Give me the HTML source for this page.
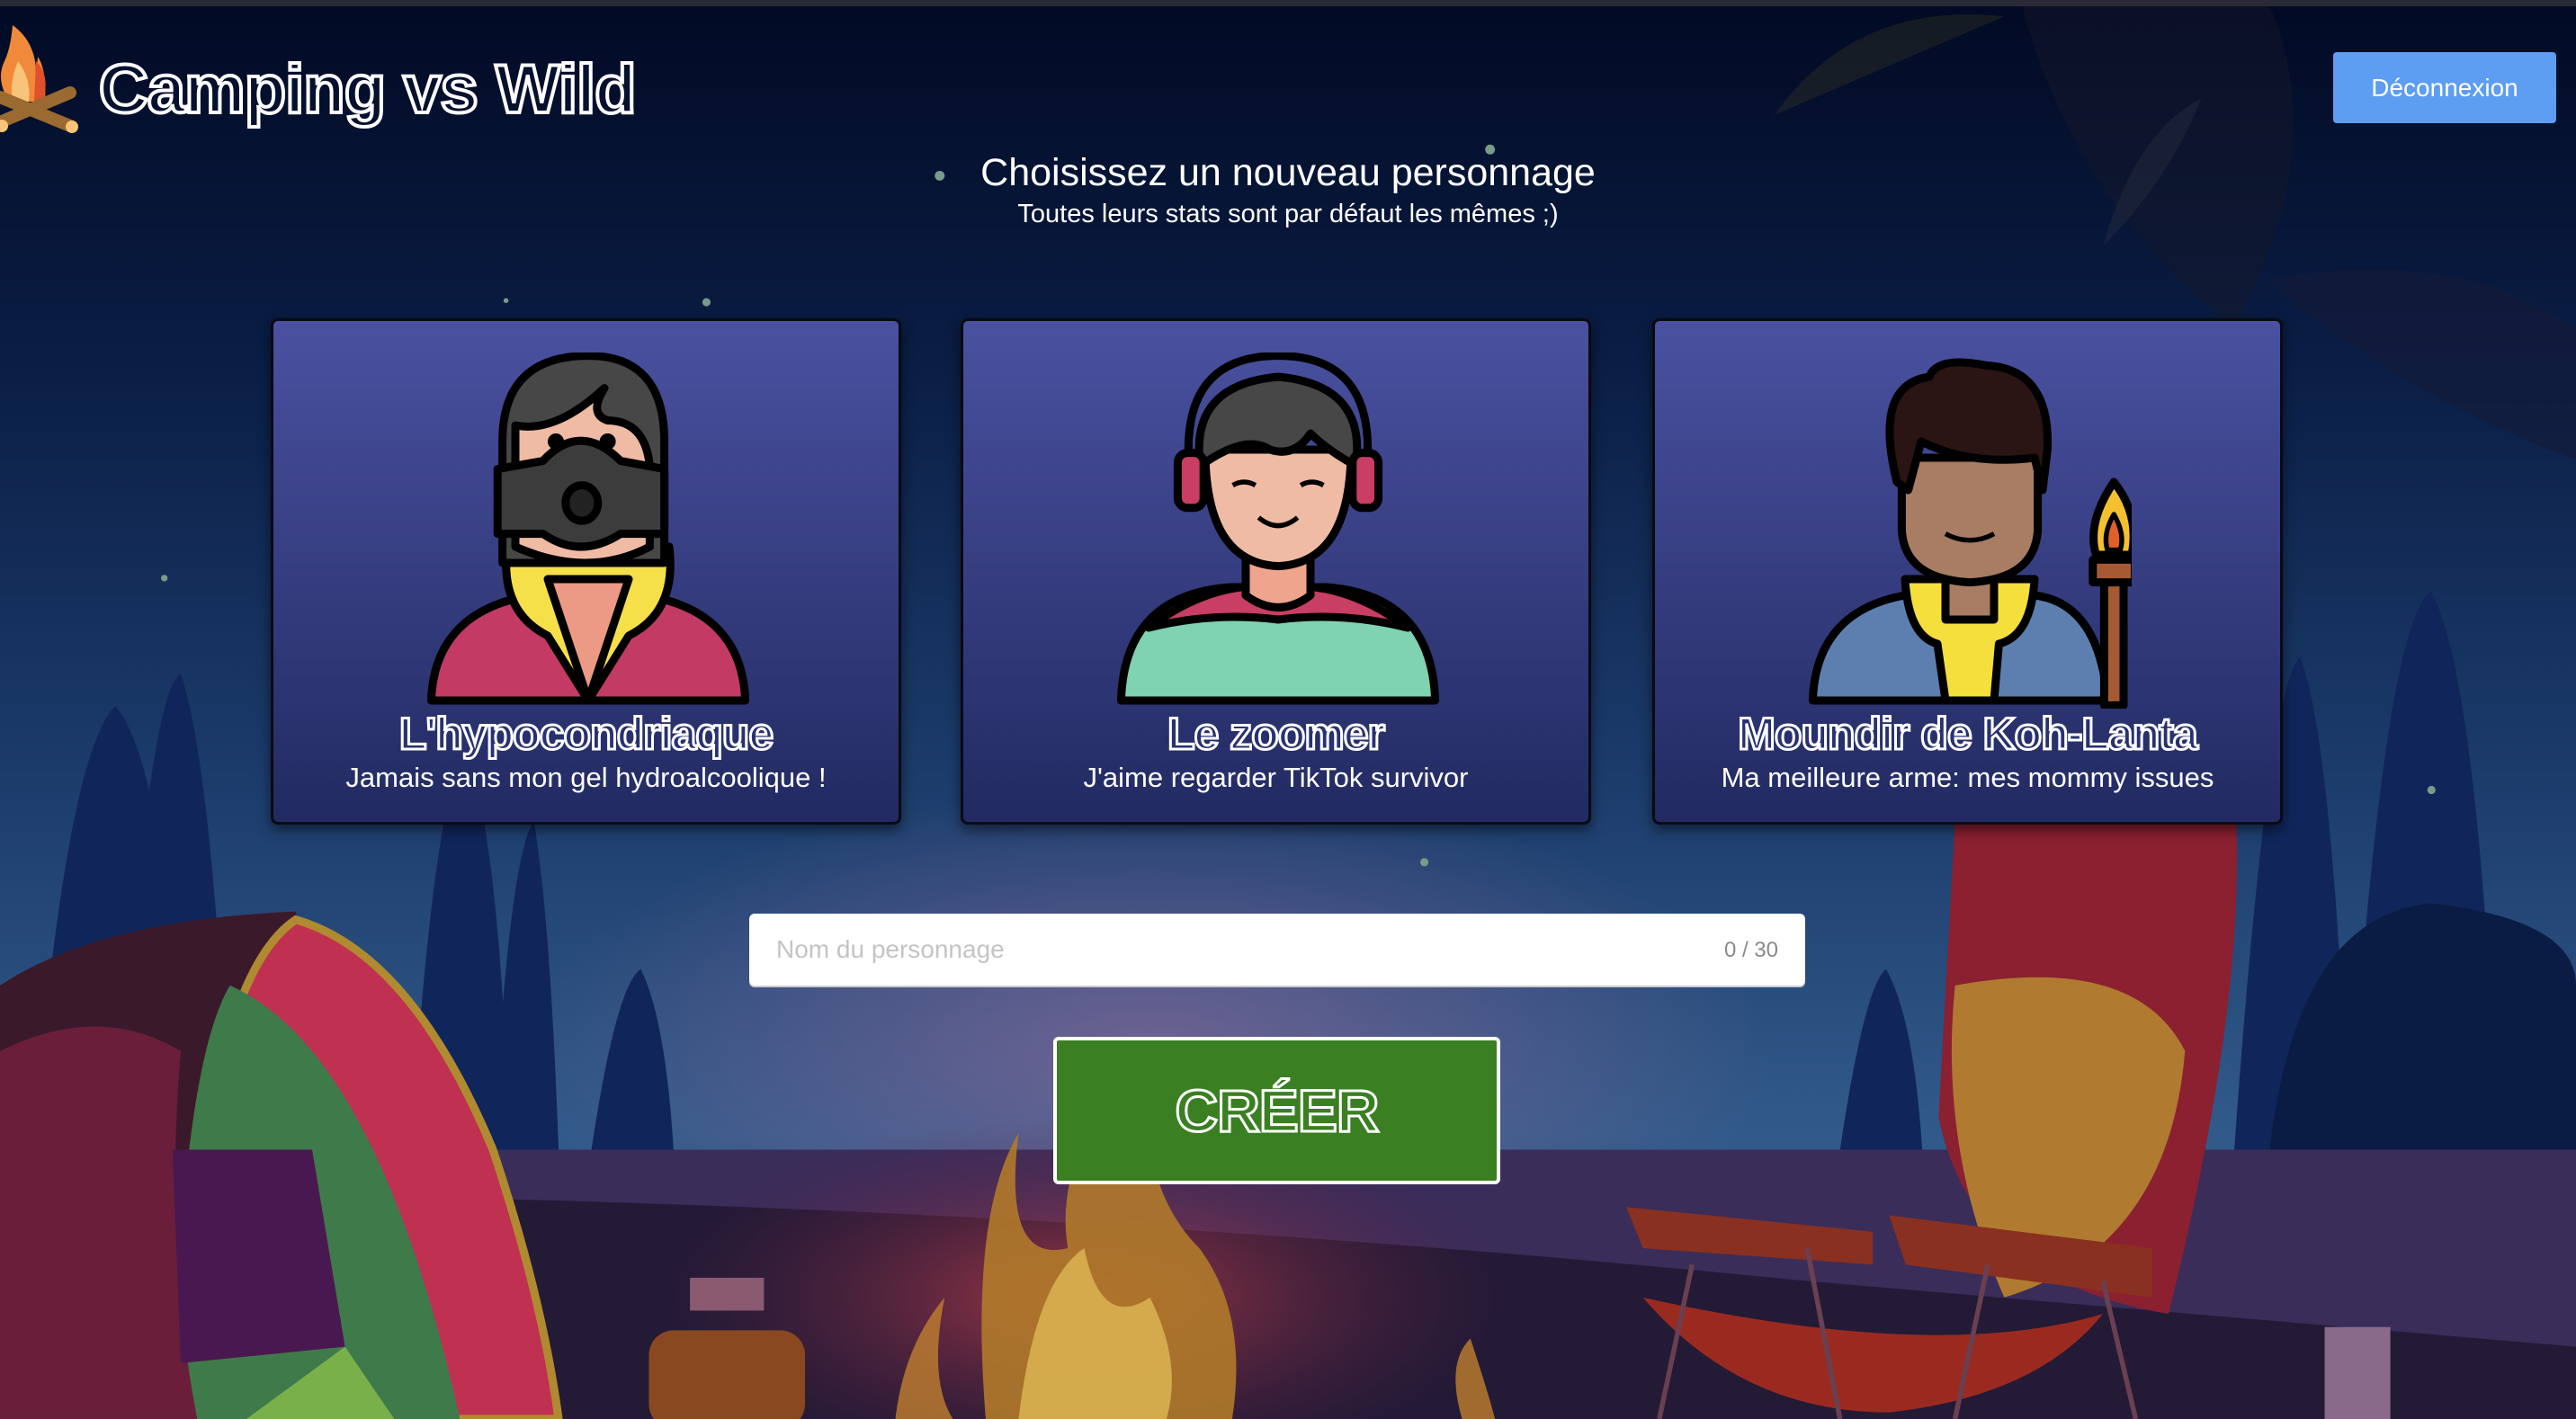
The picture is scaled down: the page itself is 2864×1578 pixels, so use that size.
<!DOCTYPE html>
<html><head><meta charset="utf-8">
<style>
html,body{margin:0;padding:0;width:2864px;height:1578px;overflow:hidden;background:#06112e;font-family:"Liberation Sans",sans-serif}
.bg{position:absolute;left:0;top:0;width:2864px;height:1578px}
.topbar{position:absolute;left:0;top:0;width:2864px;height:7px;background:#2a2a36}
.outl{color:transparent;-webkit-text-stroke:3px #fff;font-weight:bold;font-family:"Liberation Sans",sans-serif;letter-spacing:-1px}
.logo{position:absolute;left:110px;top:56px;font-size:76px;white-space:nowrap;color:#06112e;-webkit-text-stroke:4px #fff}
.btn{position:absolute;left:2594px;top:58px;width:248px;height:79px;background:#5d9df2;border-radius:4px;color:#fff;font-size:28px;line-height:79px;text-align:center}
.title{position:absolute;left:0;width:2864px;text-align:center;color:#fff}
.card{position:absolute;top:354px;width:695px;height:557px;border:3px solid #0a0a12;border-radius:8px;background:linear-gradient(#4a51a0,#222a62);box-shadow:0 6px 14px rgba(0,0,0,.5)}
.card svg{position:absolute;left:170px;top:35px;width:360px;height:396px}
.card .nm{position:absolute;left:0;width:100%;top:430px;text-align:center;font-size:50px;color:#2a3170}
.card .ds{position:absolute;left:0;width:100%;top:490px;text-align:center;font-size:31px;color:#fff}
.input{position:absolute;left:833px;top:1016px;width:1174px;height:80px;background:#fff;border-radius:6px;box-shadow:0 2px 0 #ccc}
.input .ph{position:absolute;left:30px;top:24px;font-size:28px;color:#c4c4c4}
.input .ct{position:absolute;right:30px;top:27px;font-size:24px;color:#8a8a8a}
.create{position:absolute;left:1171px;top:1153px;width:489px;height:156px;background:#3a7f22;border:4px solid #fff;border-radius:6px;text-align:center;line-height:156px;font-size:66px}
</style></head><body>
<svg class="bg" viewBox="0 0 1568 864" preserveAspectRatio="none" xmlns="http://www.w3.org/2000/svg">
<defs>
<linearGradient id="sky" x1="0" y1="0" x2="0" y2="1">
<stop offset="0" stop-color="#020a24"/><stop offset="0.25" stop-color="#0a1d44"/><stop offset="0.55" stop-color="#1c3c6c"/><stop offset="0.8" stop-color="#315a8a"/><stop offset="1" stop-color="#2a3f6c"/>
</linearGradient>
<radialGradient id="glow" cx="0.5" cy="0.5" r="0.5"><stop offset="0" stop-color="#8a6a9a" stop-opacity=".7"/><stop offset="1" stop-color="#8a6a9a" stop-opacity="0"/></radialGradient>
<radialGradient id="fglow" cx="0.5" cy="0.5" r="0.5"><stop offset="0" stop-color="#c0404a" stop-opacity=".8"/><stop offset="1" stop-color="#602040" stop-opacity="0"/></radialGradient>
</defs>
<rect width="1568" height="864" fill="url(#sky)"/>
<ellipse cx="700" cy="640" rx="380" ry="160" fill="url(#glow)"/>
<g fill="#10265a">
<path d="M20 700 Q40 460 70 430 Q100 460 120 700Z"/>
<path d="M70 700 Q90 420 110 410 Q130 470 140 700Z"/>
<path d="M250 700 Q265 470 285 460 Q305 520 310 700Z"/>
<path d="M300 700 Q310 520 325 500 Q335 560 340 700Z"/>
<path d="M360 700 Q375 600 390 590 Q405 620 410 700Z"/>
<path d="M1120 700 Q1135 600 1148 590 Q1165 620 1170 700Z"/>
<path d="M1360 700 Q1380 420 1400 400 Q1420 450 1430 700Z"/>
<path d="M1430 700 Q1450 380 1480 360 Q1510 420 1520 700Z"/>
</g>
<path d="M1380 864 Q1360 560 1480 550 Q1568 560 1568 600 L1568 864Z" fill="#0b1c44"/>
<path d="M1330 864 Q1340 750 1390 700 Q1440 760 1450 864Z" fill="#0f2250"/>
<path d="M1080 70 Q1130 0 1220 10 Q1150 40 1080 70Z" fill="#3a3a20" opacity=".35"/>
<path d="M1230 0 L1380 0 Q1420 90 1360 200 Q1260 120 1230 0Z" fill="#1a1a28" opacity=".4"/>
<path d="M1380 170 Q1500 150 1568 200 L1568 280 Q1460 240 1380 170Z" fill="#141a38" opacity=".6"/>
<path d="M1280 150 Q1300 80 1340 60 Q1320 110 1280 150Z" fill="#2a3040" opacity=".4"/>
<path d="M0 700 L1568 700 L1568 864 L0 864Z" fill="#3a2d5a"/>
<path d="M300 730 Q700 740 1100 780 L1568 820 L1568 864 L0 864 L0 740Z" fill="#231a36"/>
<ellipse cx="660" cy="790" rx="260" ry="110" fill="url(#fglow)"/>
<path d="M600 864 Q590 740 620 690 Q610 770 650 760 Q640 700 700 640 Q690 720 730 760 Q760 800 750 864Z" fill="#b07a2a" opacity=".9"/>
<path d="M620 864 Q630 780 660 760 Q670 810 700 790 Q720 830 710 864Z" fill="#d8b050" opacity=".9"/>
<path d="M545 864 Q550 820 575 790 Q565 840 580 864Z" fill="#c08030" opacity=".8"/>
<path d="M890 864 Q880 830 895 815 Q905 845 910 864Z" fill="#c08030" opacity=".8"/>
<rect x="395" y="810" width="95" height="60" rx="15" fill="#8a4820"/>
<rect x="420" y="778" width="45" height="20" fill="#8a5a70"/>
<path d="M0 600 Q60 560 180 555 L240 864 L0 864Z" fill="#3a1a2a"/>
<path d="M110 864 Q120 600 180 560 Q250 580 300 700 Q330 790 340 864Z" fill="#c03050" stroke="#b08a30" stroke-width="5"/>
<path d="M105 864 Q110 650 140 600 Q230 640 280 864Z" fill="#3f7a4a"/>
<path d="M0 864 L0 640 Q60 610 110 640 Q100 760 120 864Z" fill="#6a1e3a"/>
<path d="M105 700 L190 700 L210 820 L110 830Z" fill="#4a1850"/>
<path d="M210 820 L240 864 L150 864Z" fill="#7ab04a"/>
<path d="M1190 500 Q1200 480 1360 480 Q1370 600 1320 800 Q1200 780 1180 680Z" fill="#8a2030"/>
<path d="M1190 600 Q1300 580 1330 640 Q1320 760 1220 790 Q1180 700 1190 600Z" fill="#b07a30"/>
<path d="M990 735 L1140 750 L1140 770 L1000 760Z" fill="#8a3020"/>
<path d="M1150 740 L1310 760 L1310 790 L1160 770Z" fill="#8a3020"/>
<path d="M1000 790 Q1060 860 1150 860 Q1240 850 1280 800 Q1180 830 1000 790Z" fill="#9a2a20"/>
<path d="M1030 770 L1010 864 M1100 760 L1120 864 M1210 770 L1190 864 M1280 780 L1300 864" stroke="#6a4050" stroke-width="3"/>
<rect x="1415" y="808" width="40" height="56" fill="#8a6a8a"/>
<g fill="#7a9a8a"><circle cx="572" cy="107" r="3"/><circle cx="907" cy="91" r="3"/><circle cx="430" cy="184" r="2.5"/><circle cx="308" cy="183" r="1.5"/><circle cx="100" cy="352" r="2"/><circle cx="867" cy="525" r="2.5"/><circle cx="1480" cy="481" r="2.5"/></g>
</svg>
<div class="topbar"></div>
<svg style="position:absolute;left:0;top:28px" width="90" height="120" viewBox="0 0 90 120">
<path d="M14 0 Q42 20 40 60 L42 35 Q52 50 50 85 L10 85 Q-5 60 5 40 Q12 25 14 0Z" fill="#f08a3a"/>
<path d="M40 40 Q56 55 48 85 L38 85Z" fill="#e0502a"/>
<path d="M20 40 Q35 60 32 85 L14 85 Q10 65 20 40Z" fill="#f7c479"/>
<path d="M0 80 L78 112 M-5 110 L78 75" stroke="#9a6a30" stroke-width="14" stroke-linecap="round"/>
<circle cx="80" cy="113" r="7" fill="#f7c479"/><circle cx="2" cy="112" r="7" fill="#f7c479"/>
</svg>
<div class="logo outl">Camping vs Wild</div>
<div class="btn">Déconnexion</div>
<div class="title" style="top:168px;font-size:43px">Choisissez un nouveau personnage</div>
<div class="title" style="top:222px;font-size:29px">Toutes leurs stats sont par défaut les mêmes ;)</div>

<div class="card" style="left:301px">
<svg viewBox="0 0 200 220" stroke="#000" stroke-width="5" stroke-linejoin="round">
<path d="M3 215 Q5 160 65 150 L135 150 Q195 160 197 215Z" fill="#c33a64"/>
<path d="M50 120 Q45 160 75 175 L100 215 L125 175 Q155 160 150 120Z" fill="#f6e04a"/>
<path d="M75 140 L100 215 L125 140Z" fill="#ec9a85"/>
<path d="M47 130 L47 55 Q47 2 100 2 Q147 2 147 55 L147 130Z" fill="#474747"/>
<path d="M55 45 Q80 50 110 22 Q100 38 112 42 Q135 42 138 70 L138 120 Q100 140 55 120Z" fill="#efbba4"/>
<circle cx="80" cy="55" r="2.5" fill="#000"/><circle cx="112" cy="55" r="2.5" fill="#000"/>
<path d="M44 72 L72 67 Q95 42 120 67 L147 72 L147 112 L120 112 Q95 128 72 112 L44 112Z" fill="#3c3c3c"/>
<ellipse cx="96" cy="93" rx="10" ry="11" fill="#222"/>
</svg>
<div class="nm outl">L'hypocondriaque</div>
<div class="ds">Jamais sans mon gel hydroalcoolique !</div>
</div>

<div class="card" style="left:1068px">
<svg viewBox="0 0 200 220" stroke="#000" stroke-width="5" stroke-linejoin="round">
<path d="M3 215 Q5 150 70 145 L130 145 Q195 150 197 215Z" fill="#7fd3b0"/>
<path d="M20 170 Q60 140 100 145 Q140 140 180 170 Q140 160 100 165 Q60 160 20 170Z" fill="#c83e64"/>
<path d="M80 120 L80 150 Q100 165 120 150 L120 120Z" fill="#efa48e"/>
<path d="M55 60 Q55 130 100 132 Q145 130 145 60Z" fill="#efbba4"/>
<path d="M52 70 Q45 20 100 15 Q155 20 148 70 Q130 60 120 50 Q110 65 95 60 Q80 50 52 70Z" fill="#474747"/>
<path d="M45 70 Q40 2 100 2 Q160 2 155 70" fill="none"/>
<rect x="38" y="62" width="16" height="34" rx="6" fill="#c83e64"/>
<rect x="146" y="62" width="16" height="34" rx="6" fill="#c83e64"/>
<path d="M72 82 Q79 78 86 82 M114 82 Q121 78 128 82" fill="none" stroke-width="3"/>
<path d="M88 102 Q100 112 112 102" fill="none" stroke-width="3"/>
</svg>
<div class="nm outl">Le zoomer</div>
<div class="ds">J'aime regarder TikTok survivor</div>
</div>

<div class="card" style="left:1837px">
<svg viewBox="0 0 200 220" stroke="#000" stroke-width="5" stroke-linejoin="round">
<path d="M3 215 Q5 160 60 150 L140 150 Q180 155 185 215Z" fill="#5d7fb0"/>
<path d="M60 140 Q62 175 80 180 L85 215 L115 215 L118 180 Q138 175 140 140Z" fill="#f5df3c"/>
<path d="M85 130 L85 165 L115 165 L115 130Z" fill="#a97c64"/>
<path d="M58 65 L58 110 Q60 140 100 142 Q140 140 142 110 L142 65Z" fill="#a97c64"/>
<path d="M55 80 Q40 20 75 15 Q80 2 110 8 Q150 10 148 60 L145 85 L140 65 Q100 70 70 55 L62 85Z" fill="#2a1414"/>
<path d="M85 112 Q100 120 115 112" fill="none" stroke-width="3"/>
<rect x="183" y="140" width="12" height="78" fill="#a55a33"/>
<rect x="176" y="128" width="26" height="14" fill="#a55a33"/>
<path d="M189 80 Q205 100 200 125 L178 125 Q172 105 189 80Z" fill="#f5c030"/>
<path d="M189 100 Q196 112 193 122 L185 122 Q182 112 189 100Z" fill="#e0602a" stroke-width="3"/>
</svg>
<div class="nm outl">Moundir de Koh-Lanta</div>
<div class="ds">Ma meilleure arme: mes mommy issues</div>
</div>

<div class="input"><span class="ph">Nom du personnage</span><span class="ct">0 / 30</span></div>
<div class="create"><span class="outl" style="color:#3a7f22">CRÉER</span></div>
</body></html>
